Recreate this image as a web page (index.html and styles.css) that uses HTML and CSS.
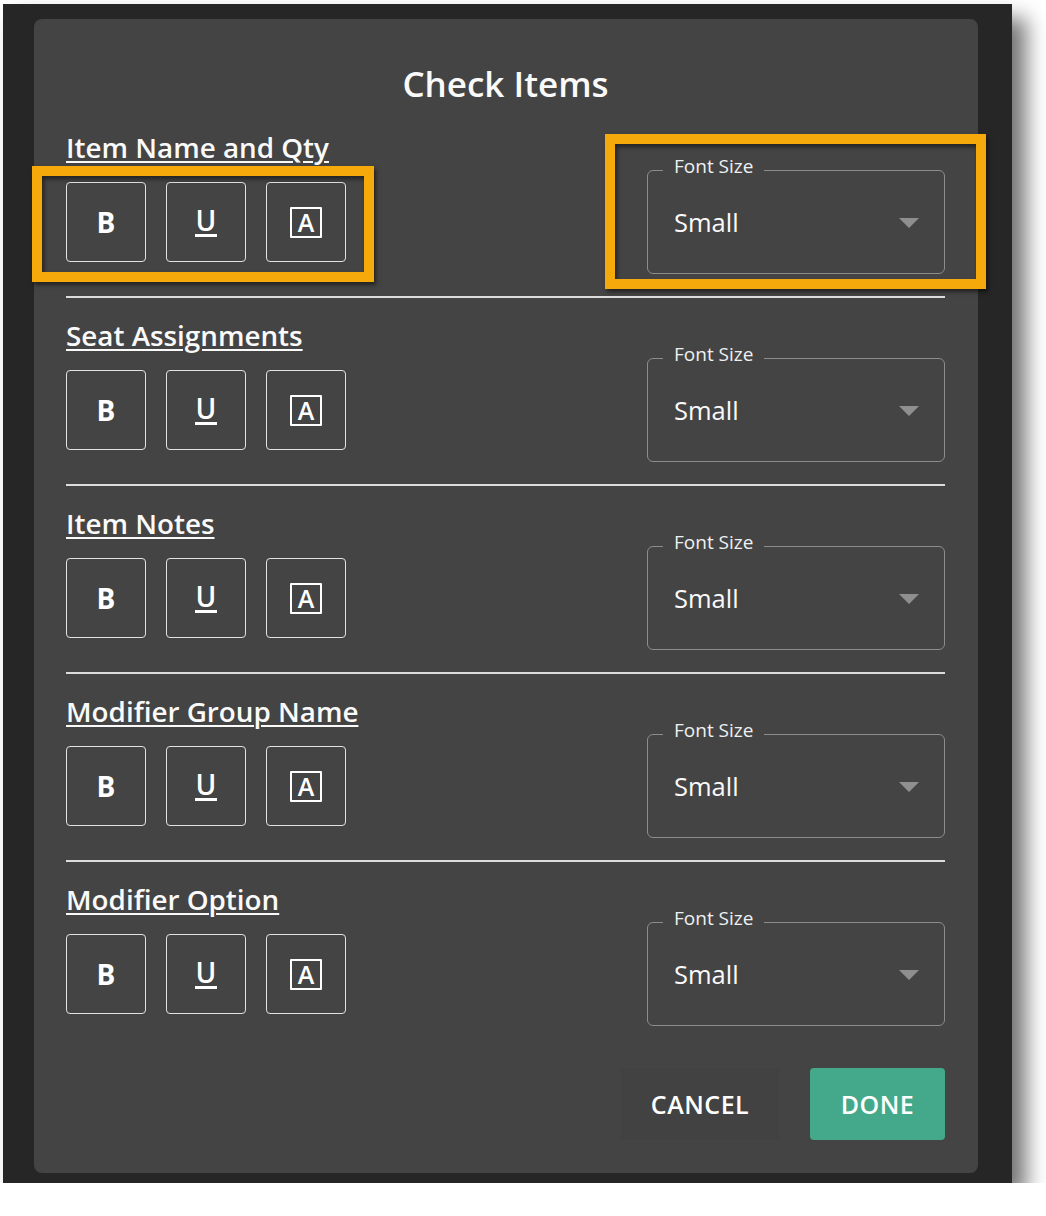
FILE: index.html
```html
<!DOCTYPE html>
<html lang="en">
<head>
<meta charset="utf-8">
<title>Check Items</title>
<link rel="stylesheet" href="styles.css">
</head>
<body>
<div class="frame">
  <div class="panel">
    <h1 class="title">Check Items</h1>

    <section class="group">
      <h2 class="group-name">Item Name and Qty</h2>
      <div class="group-row">
        <div class="styles">
          <button class="style-btn bold">B</button>
          <button class="style-btn under"><span>U</span></button>
          <button class="style-btn boxed"><span>A</span></button>
        </div>
        <div class="select">
          <span class="select-label">Font Size</span>
          <span class="select-value">Small</span>
          <span class="select-arrow"></span>
        </div>
      </div>
    </section>

    <section class="group">
      <h2 class="group-name">Seat Assignments</h2>
      <div class="group-row">
        <div class="styles">
          <button class="style-btn bold">B</button>
          <button class="style-btn under"><span>U</span></button>
          <button class="style-btn boxed"><span>A</span></button>
        </div>
        <div class="select">
          <span class="select-label">Font Size</span>
          <span class="select-value">Small</span>
          <span class="select-arrow"></span>
        </div>
      </div>
    </section>

    <section class="group">
      <h2 class="group-name">Item Notes</h2>
      <div class="group-row">
        <div class="styles">
          <button class="style-btn bold">B</button>
          <button class="style-btn under"><span>U</span></button>
          <button class="style-btn boxed"><span>A</span></button>
        </div>
        <div class="select">
          <span class="select-label">Font Size</span>
          <span class="select-value">Small</span>
          <span class="select-arrow"></span>
        </div>
      </div>
    </section>

    <section class="group">
      <h2 class="group-name">Modifier Group Name</h2>
      <div class="group-row">
        <div class="styles">
          <button class="style-btn bold">B</button>
          <button class="style-btn under"><span>U</span></button>
          <button class="style-btn boxed"><span>A</span></button>
        </div>
        <div class="select">
          <span class="select-label">Font Size</span>
          <span class="select-value">Small</span>
          <span class="select-arrow"></span>
        </div>
      </div>
    </section>

    <section class="group last">
      <h2 class="group-name">Modifier Option</h2>
      <div class="group-row">
        <div class="styles">
          <button class="style-btn bold">B</button>
          <button class="style-btn under"><span>U</span></button>
          <button class="style-btn boxed"><span>A</span></button>
        </div>
        <div class="select">
          <span class="select-label">Font Size</span>
          <span class="select-value">Small</span>
          <span class="select-arrow"></span>
        </div>
      </div>
    </section>

    <div class="actions">
      <button class="action cancel">CANCEL</button>
      <button class="action done">DONE</button>
    </div>

    <div class="highlight hl-styles"></div>
    <div class="highlight hl-select"></div>
  </div>
</div>
</body>
</html>
```

FILE: styles.css
```css
* { box-sizing: border-box; }

body {
  margin: 0;
  background: #ffffff;
  font-family: "Open Sans", Lato, sans-serif;
  color: #ffffff;
}

.frame {
  margin: 4px 0 0 3px;
  width: 1009px;
  height: 1179px;
  background: #262626;
  padding: 15px 0 0 31px;
  box-shadow: 14px 14px 20px rgba(0, 0, 0, 0.55);
}

.panel {
  position: relative;
  width: 944px;
  height: 1154px;
  background: #444444;
  border-radius: 8px;
  padding: 0 33px 0 32px;
  display: flex;
  flex-direction: column;
}

.title {
  margin: 44px 0 5px;
  font-size: 35px;
  line-height: 42px;
  font-weight: 600;
  text-align: center;
  color: #fafafa;
}

.group {
  padding: 22px 0 22px;
  border-bottom: 2px solid #dcdcdc;
}

.group.last {
  border-bottom: none;
}

.group-name {
  margin: 0 0 8px;
  font-size: 27.8px;
  line-height: 30px;
  font-weight: 600;
  text-decoration: underline;
  text-decoration-thickness: 2px;
  text-underline-offset: 3px;
  color: #fafafa;
}

.group-row {
  display: flex;
  align-items: center;
  justify-content: space-between;
  height: 104px;
}

.styles {
  display: flex;
  gap: 20px;
}

.style-btn {
  width: 80px;
  height: 80px;
  margin: 0;
  padding: 0;
  background: transparent;
  border: 1.5px solid #e2e2e2;
  border-radius: 4px;
  color: #ffffff;
  font-family: "Open Sans", Lato, sans-serif;
  display: flex;
  align-items: center;
  justify-content: center;
}

.style-btn.bold {
  font-size: 28px;
  font-weight: 700;
}

.style-btn.under span {
  font-size: 28px;
  font-weight: 600;
  line-height: 26px;
  padding: 0 1px 1px;
  border-bottom: 3px solid #ffffff;
}

.style-btn.boxed span {
  width: 32px;
  height: 31px;
  border: 2.5px solid #ffffff;
  border-radius: 1px;
  font-size: 25px;
  font-weight: 600;
  line-height: 26px;
  display: flex;
  align-items: center;
  justify-content: center;
}

.select {
  position: relative;
  width: 298px;
  height: 104px;
  border: 1.5px solid #8c8c8c;
  border-radius: 6px;
  padding: 0 25px 0 26px;
  display: flex;
  align-items: center;
  justify-content: space-between;
}

.select-label {
  position: absolute;
  top: -16px;
  left: 15px;
  padding: 0 11px;
  background: #444444;
  font-size: 19px;
  line-height: 22px;
  color: #f0f0f0;
}

.select-value {
  font-size: 25.5px;
  color: #fafafa;
}

.select-arrow {
  width: 0;
  height: 0;
  border-left: 10px solid transparent;
  border-right: 10px solid transparent;
  border-top: 10px solid #8f8f8f;
  margin-top: 2px;
}

.actions {
  margin-top: 20px;
  display: flex;
  justify-content: flex-end;
  gap: 31px;
}

.action {
  height: 72px;
  margin: 0;
  border: none;
  border-radius: 4px;
  font-family: "Open Sans", Lato, sans-serif;
  font-size: 25px;
  font-weight: 600;
  letter-spacing: 0.5px;
  color: #ffffff;
}

.cancel {
  width: 158px;
  background: #424242;
}

.done {
  width: 135px;
  background: #43a98a;
}

.highlight {
  position: absolute;
  border: 10px solid #f6a90b;
  box-shadow: 2px 3px 4px rgba(0, 0, 0, 0.5), inset 2px 3px 4px rgba(0, 0, 0, 0.5);
  pointer-events: none;
}

.hl-styles {
  left: -2px;
  top: 147px;
  width: 342px;
  height: 116px;
}

.hl-select {
  left: 571px;
  top: 115px;
  width: 381px;
  height: 155px;
}
```
